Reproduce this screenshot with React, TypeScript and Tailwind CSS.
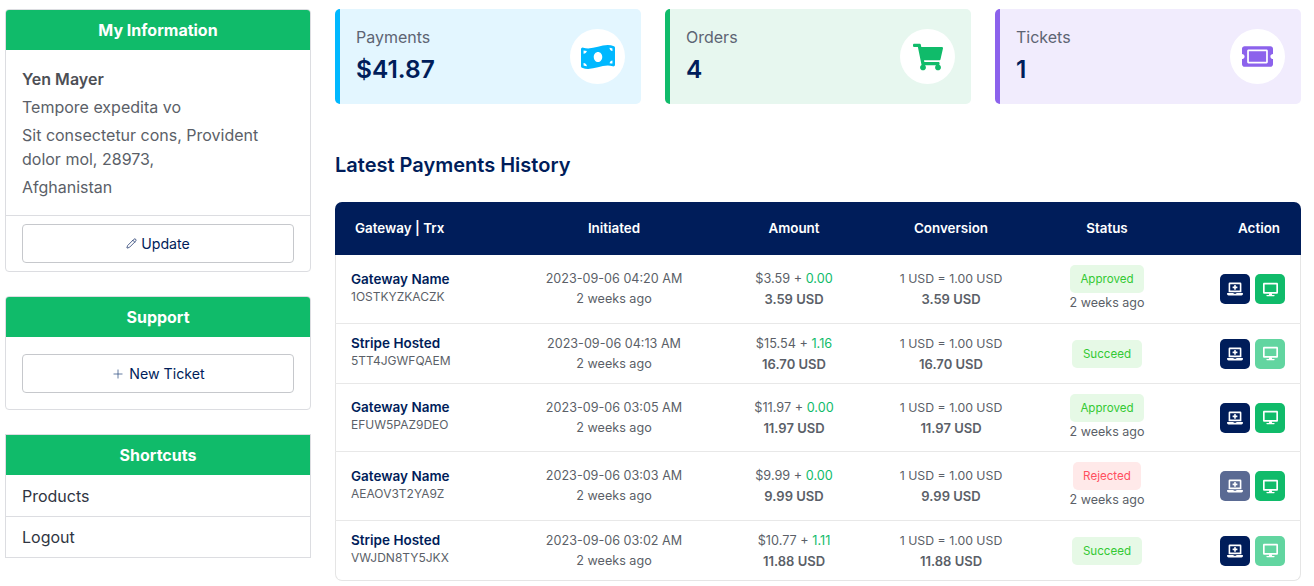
import { Pencil, Plus } from "lucide-react";
import type { ReactNode } from "react";
import {
  FaDesktop,
  FaLaptopMedical,
  FaMoneyBillWave,
  FaShoppingCart,
  FaTicketAlt,
} from "react-icons/fa";

interface Payment {
  gateway: string;
  trx: string;
  initiated: string;
  base: string;
  charge: string;
  total: string;
  status: "Approved" | "Succeed" | "Rejected";
  showAgo: boolean;
  laptopDim?: boolean;
  desktopDim?: boolean;
}

const payments: Payment[] = [
  { gateway: "Gateway Name", trx: "1OSTKYZKACZK", initiated: "2023-09-06 04:20 AM", base: "$3.59", charge: "0.00", total: "3.59 USD", status: "Approved", showAgo: true },
  { gateway: "Stripe Hosted", trx: "5TT4JGWFQAEM", initiated: "2023-09-06 04:13 AM", base: "$15.54", charge: "1.16", total: "16.70 USD", status: "Succeed", showAgo: false, desktopDim: true },
  { gateway: "Gateway Name", trx: "EFUW5PAZ9DEO", initiated: "2023-09-06 03:05 AM", base: "$11.97", charge: "0.00", total: "11.97 USD", status: "Approved", showAgo: true },
  { gateway: "Gateway Name", trx: "AEAOV3T2YA9Z", initiated: "2023-09-06 03:03 AM", base: "$9.99", charge: "0.00", total: "9.99 USD", status: "Rejected", showAgo: true, laptopDim: true },
  { gateway: "Stripe Hosted", trx: "VWJDN8TY5JKX", initiated: "2023-09-06 03:02 AM", base: "$10.77", charge: "1.11", total: "11.88 USD", status: "Succeed", showAgo: false, desktopDim: true },
];

const CardHeader = ({ title }: { title: string }) => (
  <div className="h-10 bg-[#10bb6a] text-center text-base leading-10 font-bold text-white">
    {title}
  </div>
);

const OutlineButton = ({ children }: { children: ReactNode }) => (
  <button className="flex h-[39px] w-full items-center justify-center gap-1 rounded-[4px] border border-[#c6c8cc] bg-white text-[14.2px] text-[#001d5a]">
    {children}
  </button>
);

const StatCard = ({
  label,
  value,
  bg,
  bar,
  icon,
}: {
  label: string;
  value: string;
  bg: string;
  bar: string;
  icon: ReactNode;
}) => (
  <div className={`flex h-[95px] w-[306px] items-center justify-between rounded-[5px] border-l-[5px] px-4 ${bg} ${bar}`}>
    <div className="pb-1">
      <p className="text-base leading-6 text-[#5d6473]">{label}</p>
      <p className="mt-1 text-[24.5px] leading-8 font-semibold text-[#001d5a]">{value}</p>
    </div>
    <div className="flex size-[55px] items-center justify-center rounded-full bg-white">{icon}</div>
  </div>
);

const statusStyles = {
  Approved: "bg-[#e6f9e6] text-[#34c934]",
  Succeed: "bg-[#e6f9e6] text-[#34c934]",
  Rejected: "bg-[#ffe9e9] text-[#ff5060]",
};

const App = () => {
  return (
    <div className="flex gap-6 pt-[9px] pl-[5px] font-['Inter',sans-serif]">
      <aside className="flex w-[306px] shrink-0 flex-col gap-6">
        <section className="overflow-hidden rounded-[4px] border border-[#dcdde1]">
          <CardHeader title="My Information" />
          <div className="px-4 pt-[17px] pb-4 text-base text-[#5b5f68]">
            <p className="leading-6 font-semibold text-[#4d4f55]">Yen Mayer</p>
            <p className="mt-1 leading-6">Tempore expedita vo</p>
            <p className="mt-1 leading-6">Sit consectetur cons, Provident dolor mol, 28973,</p>
            <p className="mt-1 leading-6">Afghanistan</p>
          </div>
          <div className="border-t border-[#dcdde1] px-4 pt-2 pb-2">
            <OutlineButton>
              <Pencil size={11} strokeWidth={1.5} /> Update
            </OutlineButton>
          </div>
        </section>

        <section className="overflow-hidden rounded-[4px] border border-[#dcdde1]">
          <CardHeader title="Support" />
          <div className="px-4 pt-[17px] pb-4">
            <OutlineButton>
              <Plus size={14} strokeWidth={1.25} className="text-[#2b4a80]" /> New Ticket
            </OutlineButton>
          </div>
        </section>

        <section className="border border-[#dcdde1]">
          <CardHeader title="Shortcuts" />
          <div className="h-[41px] px-4 text-base leading-[43px] text-[#2f3542]">Products</div>
          <div className="h-[41px] border-t border-[#dcdde1] px-4 text-base leading-10 text-[#2f3542]">Logout</div>
        </section>
      </aside>

      <main className="w-[966px] shrink-0">
        <div className="flex gap-6">
          <StatCard
            label="Payments"
            value="$41.87"
            bg="bg-[#e3f6ff]"
            bar="border-[#00b8ff]"
            icon={<FaMoneyBillWave size={34} className="text-[#00b8ff]" />}
          />
          <StatCard
            label="Orders"
            value="4"
            bg="bg-[#e7f7ef]"
            bar="border-[#10bb6a]"
            icon={<FaShoppingCart size={30} className="text-[#10bb6a]" />}
          />
          <StatCard
            label="Tickets"
            value="1"
            bg="bg-[#f1ecfd]"
            bar="border-[#8c62ec]"
            icon={<FaTicketAlt size={31} className="text-[#8c62ec]" />}
          />
        </div>

        <h2 className="mt-[46px] mb-[22px] text-xl leading-[30px] font-semibold text-[#001d5a]">
          Latest Payments History
        </h2>

        <div className="rounded-[7px] border-r border-b border-l border-[#e5e5e5]">
          <table className="-ml-px w-[966px] table-fixed border-separate border-spacing-0 text-[12.6px] leading-5 text-[#5b5f68]">
            <colgroup>
              <col className="w-[179px]" />
              <col className="w-[200px]" />
              <col className="w-[160px]" />
              <col className="w-[154px]" />
              <col className="w-[158px]" />
              <col />
            </colgroup>
            <thead>
              <tr className="h-[53px] text-[13.4px] text-white">
                <th className="rounded-tl-[7px] bg-[#001d5a] pb-0.5 pl-5 text-left font-semibold">Gateway | Trx</th>
                <th className="bg-[#001d5a] pb-0.5 font-semibold">Initiated</th>
                <th className="bg-[#001d5a] pb-0.5 font-semibold">Amount</th>
                <th className="bg-[#001d5a] pb-0.5 font-semibold">Conversion</th>
                <th className="bg-[#001d5a] pb-0.5 font-semibold">Status</th>
                <th className="rounded-tr-[7px] bg-[#001d5a] pr-[21px] pb-0.5 text-right font-semibold">Action</th>
              </tr>
            </thead>
            <tbody>
              {payments.map((payment, index) => {
                const cell = index < payments.length - 1 ? "border-b border-[#e8e8e8] pt-[10px] pb-[9px]" : "pt-[10px] pb-[9px]";
                return (
                  <tr key={payment.trx} className="text-center">
                    <td className={`${cell} pl-4 text-left`}>
                      <p className="text-[13.5px] leading-[18px] font-semibold text-[#001d5a]">{payment.gateway}</p>
                      <p className="mb-[3px] text-xs leading-[18px]">{payment.trx}</p>
                    </td>
                    <td className={cell}>
                      <p>{payment.initiated}</p>
                      <p>2 weeks ago</p>
                    </td>
                    <td className={cell}>
                      <p className="text-[12.7px]">
                        {payment.base} + <span className="text-[#10bb6a]">{payment.charge}</span>
                      </p>
                      <p className="text-[13px] font-semibold">{payment.total}</p>
                    </td>
                    <td className={cell}>
                      <p className="text-[12.3px]">1 USD = 1.00 USD</p>
                      <p className="text-[13px] font-semibold">{payment.total}</p>
                    </td>
                    <td className={cell}>
                      <span className={`mx-auto block h-7 w-fit rounded-[5px] px-[10.5px] text-[11.6px] leading-7 ${statusStyles[payment.status]}`}>
                        {payment.status}
                      </span>
                      {payment.showAgo && <p className="text-[12.5px] leading-[20.5px]">2 weeks ago</p>}
                    </td>
                    <td className={`${cell} pr-4`}>
                      <div className="flex justify-end gap-[5px]">
                        <span className={`flex size-[30px] items-center justify-center rounded-[5px] text-white ${payment.laptopDim ? "bg-[#5a6a93]" : "bg-[#001d5a]"}`}>
                          <FaLaptopMedical size={16} />
                        </span>
                        <span className={`flex size-[30px] items-center justify-center rounded-[5px] text-white ${payment.desktopDim ? "bg-[#62d5a0]" : "bg-[#10bb6a]"}`}>
                          <FaDesktop size={15} />
                        </span>
                      </div>
                    </td>
                  </tr>
                );
              })}
            </tbody>
          </table>
        </div>
      </main>
    </div>
  );
};

export default App;
